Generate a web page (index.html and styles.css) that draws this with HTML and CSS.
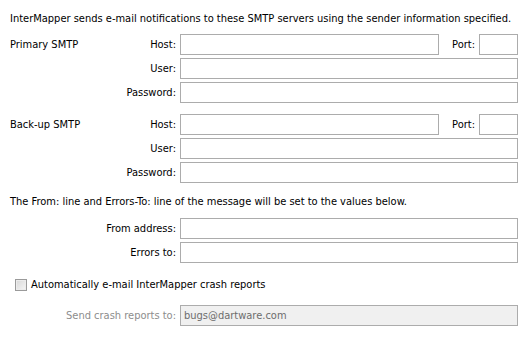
FILE: index.html
```html
<!DOCTYPE html>
<html lang="en">
<head>
  <meta charset="UTF-8" />
  <title>SMTP Settings</title>
  <link rel="stylesheet" href="styles.css">
</head>
<body>

<div class="panel">
  <p class="intro">InterMapper sends e-mail notifications to these SMTP servers using the sender information specified.</p>

  <!-- PRIMARY -->
  <div class="group">
    <div class="row">
      <div class="row-head">
        <span class="group-label">Primary SMTP</span>
        <label class="field-label">Host:</label>
      </div>
      <input type="text" class="field">
      <label class="port-label">Port:</label>
      <input type="text" class="field port">
    </div>
    <div class="row">
      <div class="row-head"><label class="field-label">User:</label></div>
      <input type="text" class="field">
    </div>
    <div class="row">
      <div class="row-head"><label class="field-label">Password:</label></div>
      <input type="password" class="field">
    </div>
  </div>

  <!-- BACKUP -->
  <div class="group">
    <div class="row">
      <div class="row-head">
        <span class="group-label">Back-up SMTP</span>
        <label class="field-label">Host:</label>
      </div>
      <input type="text" class="field">
      <label class="port-label">Port:</label>
      <input type="text" class="field port">
    </div>
    <div class="row">
      <div class="row-head"><label class="field-label">User:</label></div>
      <input type="text" class="field">
    </div>
    <div class="row">
      <div class="row-head"><label class="field-label">Password:</label></div>
      <input type="password" class="field">
    </div>
  </div>

  <p class="note">The From: line and Errors-To: line of the message will be set to the values below.</p>

  <div class="group">
    <div class="row">
      <div class="row-head"><label class="field-label">From address:</label></div>
      <input type="text" class="field">
    </div>
    <div class="row">
      <div class="row-head"><label class="field-label">Errors to:</label></div>
      <input type="text" class="field">
    </div>
  </div>

  <label class="check-row">
    <span class="checkbox"></span>
    Automatically e-mail InterMapper crash reports
  </label>

  <div class="row disabled">
    <div class="row-head"><label class="field-label">Send crash reports to:</label></div>
    <input type="text" class="field" value="bugs@dartware.com" disabled>
  </div>
</div>

</body>
</html>
```

FILE: styles.css
```css
body {
  margin: 0;
  background-color: #ffffff;
  color: #000000;
  font-family: "DejaVu Sans Condensed", "DejaVu Sans", sans-serif;
  font-size: 11px;
}

.panel {
  width: 508px;
  padding: 12px 0 0 10px;
}

.intro,
.note {
  margin: 0;
  height: 13px;
  line-height: 13px;
}

.group {
  display: flex;
  flex-direction: column;
  gap: 3px;
  margin-top: 9px;
}

.group + .group {
  margin-top: 11px;
}

.note {
  margin-top: 12px;
}

.note + .group {
  margin-top: 10px;
}

.row {
  display: flex;
  align-items: center;
  height: 21px;
}

.row-head {
  width: 166px;
  flex: none;
  display: flex;
  margin-right: 4px;
  white-space: nowrap;
}

.field-label {
  margin-left: auto;
}

.field {
  flex: 1;
  min-width: 0;
  height: 21px;
  box-sizing: border-box;
  margin: 0;
  padding: 0 3px;
  border: 1px solid #acacac;
  border-radius: 0;
  background: #ffffff;
  font: inherit;
  color: #000;
  outline: none;
}

.port-label {
  margin: 0 4px 0 13px;
}

.field.port {
  flex: none;
  width: 39px;
}

.check-row {
  display: flex;
  align-items: center;
  gap: 4px;
  height: 13px;
  margin: 15px 0 0 5px;
}

.checkbox {
  width: 10px;
  height: 10px;
  border: 1px solid #9a9a9a;
  background: linear-gradient(135deg, #d8d8d8, #f6f6f6);
  box-shadow: inset 0 0 0 1px #ececec;
}

.disabled {
  margin-top: 14px;
}

.disabled .field-label {
  color: #8d8d8d;
}

.disabled .field {
  background: #f0f0f0;
  color: #6d6d6d;
}
```
